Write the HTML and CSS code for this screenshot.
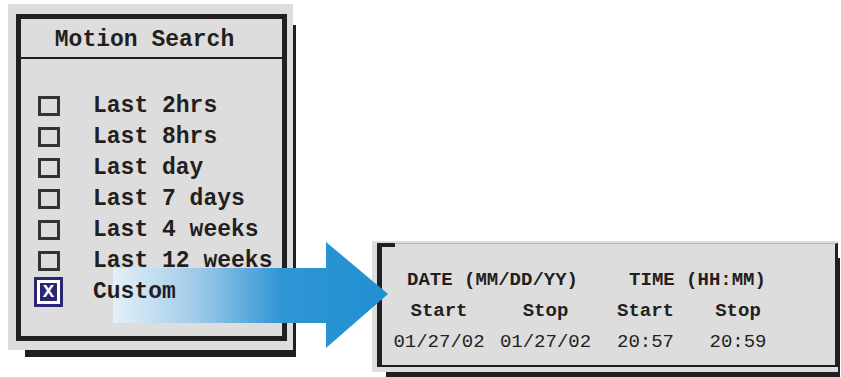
FILE: index.html
```html
<!DOCTYPE html>
<html>
<head>
  <title>Motion Search</title>
  <link rel="stylesheet" href="styles.css">
</head>
<body>
  <div class="page">
    <div class="menu">
      <div class="menu-frame">
        <div class="menu-title">Motion Search</div>
        <ul class="menu-list">
          <li><span class="box"></span>Last 2hrs</li>
          <li><span class="box"></span>Last 8hrs</li>
          <li><span class="box"></span>Last day</li>
          <li><span class="box"></span>Last 7 days</li>
          <li><span class="box"></span>Last 4 weeks</li>
          <li><span class="box"></span>Last 12 weeks</li>
          <li><span class="box checked"><span class="mark">X</span></span>Custom</li>
        </ul>
      </div>
    </div>

    <div class="range">
      <div class="range-frame">
        <div class="range-grid">
          <div class="head wide">DATE (MM/DD/YY)</div>
          <div class="head wide time">TIME (HH:MM)</div>
          <div class="head">Start</div>
          <div class="head">Stop</div>
          <div class="head">Start</div>
          <div class="head">Stop</div>
          <div class="value">01/27/02</div>
          <div class="value">01/27/02</div>
          <div class="value">20:57</div>
          <div class="value">20:59</div>
        </div>
      </div>
    </div>

    <!-- big blue arrow pointing from the menu to the date panel -->
    <svg class="arrow" width="280" height="112" viewBox="0 0 280 112">
      <defs>
        <linearGradient id="fade" x1="0" y1="0" x2="280" y2="0" gradientUnits="userSpaceOnUse">
          <stop offset="0" stop-color="#e6f0f8"/>
          <stop offset="0.3" stop-color="#9ecbe9"/>
          <stop offset="0.6" stop-color="#2f96d4"/>
          <stop offset="1" stop-color="#1f8fd1"/>
        </linearGradient>
      </defs>
      <polygon points="0,28 213,28 213,2 275,54 213,108 213,83 0,83" fill="url(#fade)"/>
    </svg>
  </div>
</body>
</html>
```

FILE: styles.css
```css
body {
  margin: 0;
  padding: 0;
  background-color: #fff;
  font-family: "Liberation Mono", "Courier New", monospace;
  font-weight: bold;
  color: #231f20;
}

.page {
  position: relative;
  display: flex;
  align-items: flex-start;
  width: 841px;
  height: 377px;
  overflow: hidden;
}

/* left menu */
.menu {
  width: 285px;
  height: 346px;
  margin: 4px 0 0 8px;
  padding: 10px 6px 9px 8px;
  box-sizing: border-box;
  background-color: #dddddd;
  box-shadow: 10px 14px 0 -7px #231f20;
}

.menu-frame {
  height: 100%;
  box-sizing: border-box;
  border: 5px solid #231f20;
}

.menu-title {
  height: 38px;
  line-height: 43px;
  padding-right: 14px;
  border-bottom: 2px solid #231f20;
  font-size: 23px;
  text-align: center;
}

.menu-list {
  list-style: none;
  margin: 0;
  padding: 31px 0 0 17px;
}

.menu-list li {
  position: relative;
  z-index: 2;
  display: flex;
  align-items: center;
  height: 31px;
  font-size: 23px;
}

.box {
  width: 22px;
  height: 20px;
  margin-right: 33px;
  box-sizing: border-box;
  border: 3px solid #333;
}

.box.checked {
  display: flex;
  width: 29px;
  height: 30px;
  margin: 0 30px 0 -4px;
  padding: 3px;
  border-color: #2a2675;
  background-color: #fff;
}

.mark {
  flex: 1;
  background-color: #2a2675;
  color: #fff;
  font-size: 19px;
  line-height: 18px;
  text-align: center;
}

/* right date panel */
.range {
  width: 466px;
  height: 131px;
  margin: 241px 0 0 79px;
  padding: 2px 0 5px 5px;
  box-sizing: border-box;
  background-color: #dddddd;
  box-shadow: 8px 11px 0 -6px #231f20;
}

.range-frame {
  position: relative;
  height: 100%;
  box-sizing: border-box;
  padding: 20px 0 0 4px;
  border-top: 1px solid #b8b8b8;
  border-left: 5px solid #231f20;
  border-right: 3px solid #231f20;
  border-bottom: 2px solid #231f20;
}

.range-frame::before {
  content: "";
  position: absolute;
  top: -1px;
  left: -5px;
  width: 18px;
  height: 4px;
  background-color: #231f20;
}

.range-grid {
  display: grid;
  grid-template-columns: 106px 107px 93px 92px;
  grid-auto-rows: 31px;
  align-items: center;
  justify-items: center;
  font-size: 19px;
}

.wide {
  grid-column: span 2;
}

.wide.time {
  padding-left: 12px;
}

.value {
  font-weight: normal;
}

.arrow {
  position: absolute;
  left: 113px;
  top: 240px;
  z-index: 1;
}
```
